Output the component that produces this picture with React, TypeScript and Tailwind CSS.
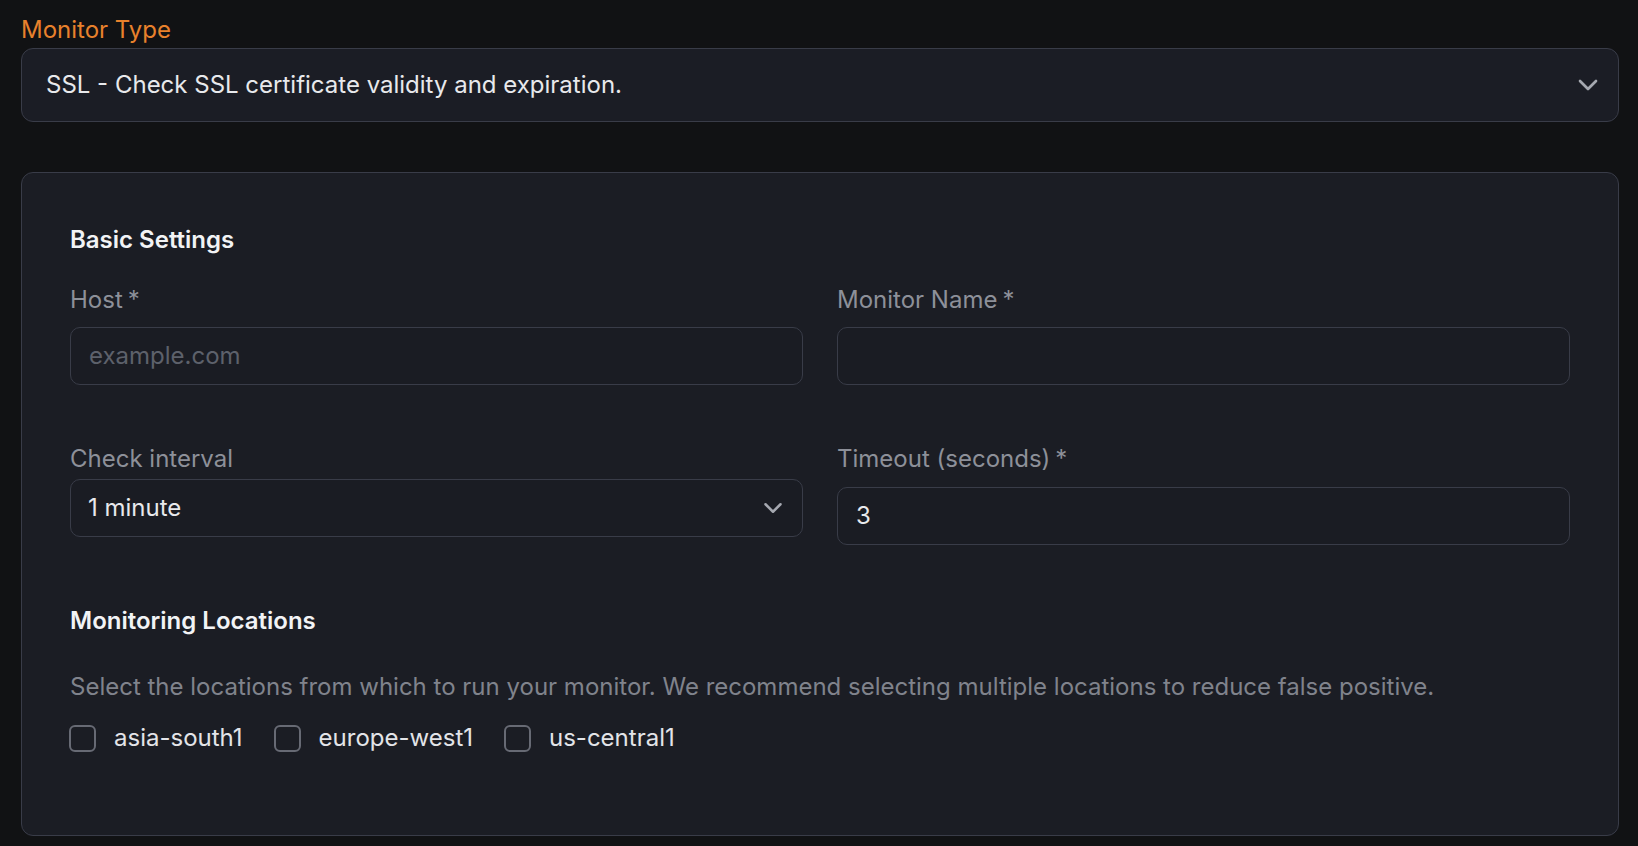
import { ChevronDown } from "lucide-react"

const locations = ["asia-south1", "europe-west1", "us-central1"]

function Label({ children, required }: { children: React.ReactNode; required?: boolean }) {
  return (
    <label className="block text-[24px] leading-[32px] text-[#8d9099]">
      {children}
      {required && <span className="ml-[5px]">*</span>}
    </label>
  )
}

function TextInput({ placeholder, value }: { placeholder?: string; value?: string }) {
  return (
    <div className="flex h-[58px] items-center rounded-[10px] border border-[#393c48] bg-[#1a1c23] px-[18px] text-[24px]">
      {value ? (
        <span className="text-[#e8e9ec]">{value}</span>
      ) : (
        <span className="text-[#5d616b]">{placeholder}</span>
      )}
    </div>
  )
}

export default function App() {
  return (
    <div
      className="h-[846px] w-full bg-[#111214] pl-[21px] pr-[19px] pt-[14px]"
      style={{ fontFamily: "Inter, 'Noto Sans', sans-serif" }}
    >
      {/* Monitor type picker */}
      <div className="text-[24px] leading-[32px] text-[#e8812c]">Monitor Type</div>
      <div className="mt-[2px] flex h-[74px] items-center justify-between rounded-[12px] border border-[#393c48] bg-[#1b1d25] pl-[24px] pr-[14px]">
        <span className="text-[24px] text-[#e8e9ec]">SSL - Check SSL certificate validity and expiration.</span>
        <ChevronDown size={32} strokeWidth={2} className="text-[#a5a8b0]" />
      </div>

      {/* Settings card */}
      <div className="mt-[50px] h-[664px] rounded-[12px] border border-[#393c48] bg-[#1b1d24] px-[48px] pt-[51px]">
        <h3 className="text-[24px] font-semibold leading-[32px] text-[#f2f3f5]">Basic Settings</h3>

        <div className="mt-[28px] grid grid-cols-2 gap-x-[34px]">
          <div>
            <Label required>Host</Label>
            <div className="mt-[11px]">
              <TextInput placeholder="example.com" />
            </div>
          </div>
          <div>
            <Label required>Monitor Name</Label>
            <div className="mt-[11px]">
              <TextInput />
            </div>
          </div>

          <div className="mt-[58px]">
            <Label>Check interval</Label>
            <div className="mt-[4px] flex h-[58px] items-center justify-between rounded-[10px] border border-[#393c48] bg-[#1a1c23] pl-[17px] pr-[14px]">
              <span className="text-[24px] text-[#e8e9ec]">1 minute</span>
              <ChevronDown size={30} strokeWidth={2} className="text-[#a5a8b0]" />
            </div>
          </div>
          <div className="mt-[58px]">
            <Label required>Timeout (seconds)</Label>
            <div className="mt-[12px]">
              <TextInput value="3" />
            </div>
          </div>
        </div>

        <h3 className="mt-[60px] text-[24px] font-semibold leading-[32px] text-[#f2f3f5]">Monitoring Locations</h3>
        <p className="mt-[35px] text-[24px] leading-[30px] text-[#80838c]">
          Select the locations from which to run your monitor. We recommend selecting multiple locations to reduce false positive.
        </p>
        <div className="mt-[21px] flex items-center">
          {locations.map((loc) => (
            <label key={loc} className="mr-[32px] flex items-center">
              <span className="-ml-[1px] h-[27px] w-[27px] rounded-[6px] border-2 border-[#676a74]" />
              <span className="ml-[18px] text-[24px] leading-[30px] text-[#e3e4e8]">{loc}</span>
            </label>
          ))}
        </div>
      </div>
    </div>
  )
}
